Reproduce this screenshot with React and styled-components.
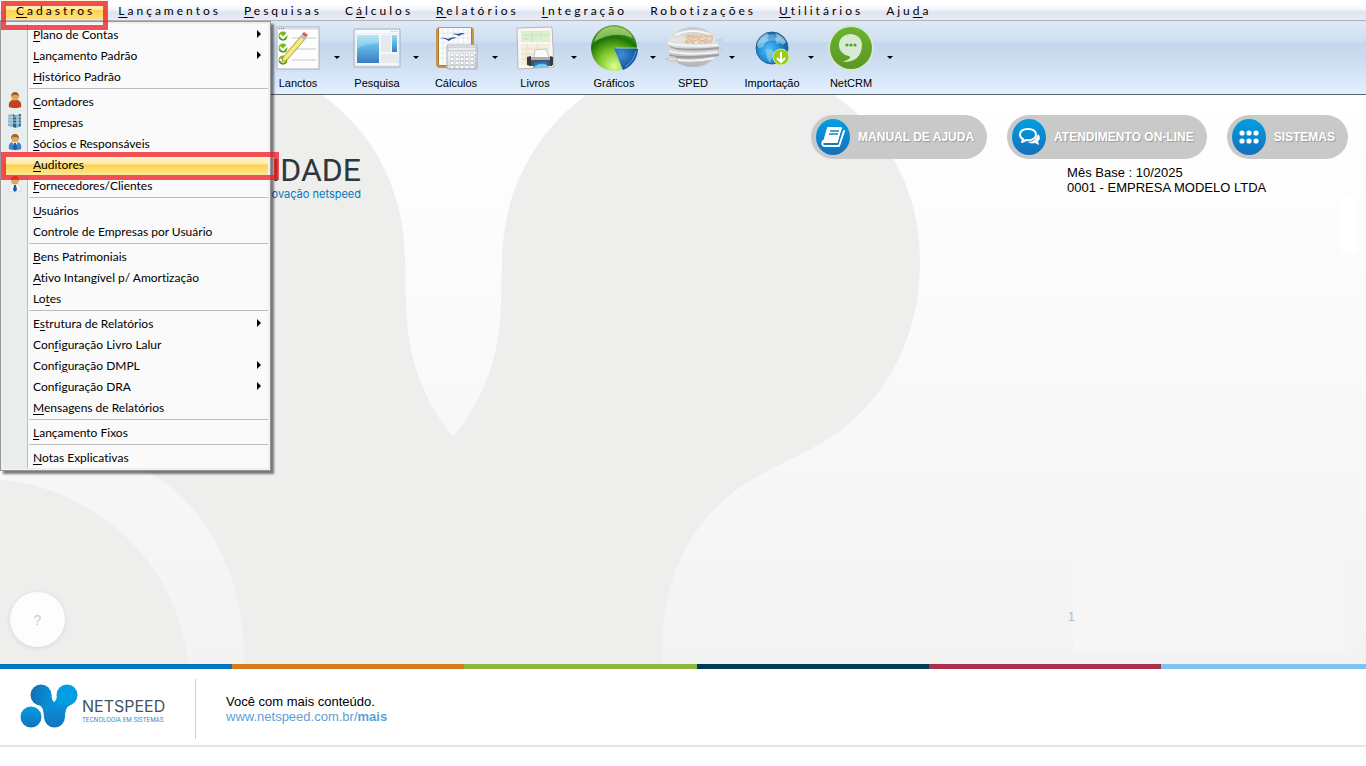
import React from "react";
import styled, { createGlobalStyle, css } from "styled-components";

const GlobalStyle = createGlobalStyle`
  * {
    box-sizing: border-box;
  }
  body {
    margin: 0;
    background-color: #ffffff;
    color: #000000;
    font-family: "Liberation Sans", Arial, sans-serif;
  }
  button {
    margin: 0;
    padding: 0;
    border: 0;
    background: none;
    color: inherit;
    font: inherit;
  }
`;

const Page = styled.div`
  position: relative;
  display: flex;
  flex-direction: column;
  min-height: 100vh;
`;

const MenuBar = styled.nav`
  display: flex;
  height: 21px;
  padding-left: 4px;
  background: linear-gradient(#ffffff 20%, #f2f4fa 50%, #dfe4f1 60%, #e9ecf6);
  border-bottom: 1px solid #b4b4b4;
`;

const MenuButton = styled.button`
  height: 20px;
  padding: 2px 11px 0 12px;
  font-family: Lato, "Open Sans", sans-serif;
  font-size: 12px;
  line-height: 18px;
  letter-spacing: 3px;
  white-space: nowrap;
  ${props =>
    props.$active &&
    css`
      background: linear-gradient(#fff6d6, #ffe9a4 48%, #ffd24c 52%, #ffe287);
    `}
`;

const Mnemonic = styled.u`
  text-underline-offset: 2px;
`;

const ToolBar = styled.div`
  display: flex;
  height: 74px;
  padding-left: 269px;
  background: linear-gradient(
    #dee9f7,
    #cfdff1 28%,
    #c4d6eb 30%,
    #cfdff2 60%,
    #e3f0ff
  );
  border-bottom: 1px solid #5d6269;
`;

const Tool = styled.div`
  display: flex;
  flex: 0 0 79px;
`;

const ToolButton = styled.button`
  display: flex;
  flex-direction: column;
  align-items: center;
  width: 58px;
  padding-top: 2px;
  font-size: 11px;
  line-height: 16px;
  white-space: nowrap;
`;

const ToolIcon = styled.svg`
  width: 56px;
  height: 50px;
  margin-bottom: 2px;
  overflow: visible;
`;

const DropButton = styled.button`
  display: flex;
  align-items: center;
  justify-content: center;
  width: 20px;
`;

const Caret = styled.span`
  border: 3px solid transparent;
  border-top-color: #000000;
  border-bottom: 0;
`;

const Stage = styled.main`
  position: relative;
  display: flex;
  flex: 1;
  justify-content: space-between;
  background: linear-gradient(#ffffff, #f3f3f3);
`;

const Backdrop = styled.svg`
  position: absolute;
  top: 0;
  left: 0;
  width: 100%;
  height: 100%;
`;

const Brand = styled.div`
  position: relative;
  width: 361px;
  padding-top: 57px;
  text-align: right;
  white-space: nowrap;
`;

const BrandName = styled.h1`
  margin: 0;
  color: #2c373f;
  font-family: Roboto, sans-serif;
  font-size: 32px;
  font-weight: 400;
  line-height: 36px;
`;

const BrandLine = styled.p`
  margin: 0;
  color: #0077bf;
  font-family: Inter, sans-serif;
  font-size: 11px;
  line-height: 12px;
`;

const Side = styled.div`
  position: relative;
  padding: 20px 18px 0 0;
`;

const Pills = styled.div`
  display: flex;
  gap: 20px;
`;

const Pill = styled.button`
  display: flex;
  align-items: center;
  gap: 8px;
  height: 44px;
  padding: 0 13px 0 5px;
  border-radius: 22px;
  background-color: #c9c9c9;
  color: #ffffff;
  font-size: 12px;
  font-weight: bold;
  text-shadow: 1px 1px 1px #999999;
  white-space: nowrap;
`;

const PillIcon = styled.svg`
  width: 34px;
  height: 36px;
`;

const Company = styled.div`
  margin: 6px 0 0 256px;
  font-size: 13px;
  line-height: 15px;
`;

const Help = styled.button`
  position: absolute;
  left: 10px;
  bottom: 17px;
  width: 55px;
  height: 55px;
  border-radius: 50%;
  background-color: #fdfdfd;
  box-shadow: 0 1px 4px #d4d4d4;
  color: #cccccc;
  font-size: 14px;
`;

const Panel = styled.div`
  position: absolute;
  right: 21px;
  bottom: 13px;
  width: 272px;
  height: 148px;
  background: linear-gradient(#f7f7f700, #f7f7f7);
`;

const Counter = styled.span`
  position: absolute;
  right: 291px;
  bottom: 40px;
  color: #b9b9c4;
  font-size: 13px;
  line-height: 15px;
`;

const Patch = styled.div`
  position: absolute;
  top: 102px;
  right: 9px;
  width: 16px;
  height: 56px;
  background-color: #ffffff;
`;

const Stripe = styled.div`
  display: flex;
  height: 5px;
`;

const Band = styled.span`
  flex: 0 0 17%;
  background-color: ${props => props.$color};
  &:last-child {
    flex: 1;
  }
`;

const Footer = styled.footer`
  display: flex;
  align-items: center;
  height: 78px;
  margin-bottom: 19px;
  padding: 4px 0 0 20px;
  border-bottom: 2px solid #e4e5e4;
`;

const FooterMark = styled.svg`
  width: 58px;
  height: 44px;
  margin-bottom: 6px;
`;

const FooterBrand = styled.div`
  width: 118px;
  height: 60px;
  padding: 18px 0 0 4px;
  border-right: 1px solid #cfcfcf;
  font-family: Inter, sans-serif;
  white-space: nowrap;
`;

const FooterName = styled.div`
  color: #44535f;
  font-size: 16px;
  line-height: 18px;
`;

const FooterTag = styled.div`
  color: #2b86c8;
  font-size: 6px;
  line-height: 10px;
`;

const FooterText = styled.div`
  padding-left: 30px;
  font-size: 13px;
  line-height: 15px;
`;

const FooterLink = styled.a`
  display: block;
  color: #5b9fd6;
  text-decoration: none;
`;

const Menu = styled.ul`
  position: absolute;
  top: 21px;
  left: 0;
  width: 271px;
  margin: 0;
  padding: 2px;
  border: 1px solid #979797;
  background: linear-gradient(
        to right,
        #e8eeee 24px,
        #bdbdbd 24px,
        #bdbdbd 25px,
        #fafafa 25px
      )
      content-box,
    linear-gradient(#f0f0f0, #f0f0f0);
  box-shadow: 3px 3px 2px #00000080;
  list-style: none;
`;

const Entry = styled.li`
  height: 21px;
`;

const EntryButton = styled.button`
  display: flex;
  align-items: center;
  width: 100%;
  height: 21px;
  font-family: Lato, "Open Sans", sans-serif;
  font-size: 12px;
  font-variant-ligatures: none;
  line-height: 20px;
  text-align: left;
  white-space: nowrap;
  ${props =>
    props.$active &&
    css`
      background: linear-gradient(#fffbe8, #ffe9a6 48%, #ffd146 52%, #ffe796);
    `}
`;

const EntryIcon = styled.svg`
  flex: none;
  width: 16px;
  height: 18px;
  margin: 0 10px 4px 4px;
`;

const EntryLabel = styled.span`
  flex: 1;
`;

const Arrow = styled.span`
  margin: 0 7px 2px 0;
  border: 4px solid transparent;
  border-left-color: #000000;
  border-right: 0;
`;

const Separator = styled.li`
  height: 4px;
  margin-left: 26px;
  border-top: 1px solid transparent;
  background: linear-gradient(#bdbdbd 1px, transparent 1px) padding-box;
`;

const Marker = styled.div`
  position: absolute;
  top: ${props => props.$top}px;
  left: 1px;
  width: ${props => props.$width}px;
  height: ${props => props.$height}px;
  border: 5px solid #ee1c24c4;
  pointer-events: none;
`;

const menus = [
  "&Cadastros",
  "&Lançamentos",
  "&Pesquisas",
  "C&álculos",
  "&Relatórios",
  "&Integração",
  "Robotizações",
  "&Utilitários",
  "Aju&da"
];

const entries = [
  { label: "&Plano de Contas", arrow: true },
  { label: "&Lançamento Padrão", arrow: true },
  { label: "&Histórico Padrão" },
  null,
  { label: "&Contadores", icon: "red" },
  { label: "&Empresas", icon: "building" },
  { label: "&Sócios e Responsáveis", icon: "blue" },
  { label: "&Auditores", active: true },
  { label: "&Fornecedores/Clientes", icon: "white" },
  null,
  { label: "&Usuários" },
  { label: "Controle de Empresas por Usuário" },
  null,
  { label: "&Bens Patrimoniais" },
  { label: "&Ativo Intangível p/ Amortização" },
  { label: "Lo&tes" },
  null,
  { label: "E&strutura de Relatórios", arrow: true },
  { label: "Con&figuração Livro Lalur" },
  { label: "Confi&guração DMPL", arrow: true },
  { label: "Configuração DRA", arrow: true },
  { label: "&Mensagens de Relatórios" },
  null,
  { label: "&Lançamento Fixos" },
  null,
  { label: "&Notas Explicativas" }
];

const stripe = ["#0077bf", "#d67c1c", "#8db63c", "#003b57", "#a7304b", "#80c3f0"];

// "&" marks the underlined access key
const Label = ({ text }) => {
  const at = text.indexOf("&");
  if (at < 0) {
    return text;
  }
  return (
    <>
      {text.slice(0, at)}
      <Mnemonic>{text[at + 1]}</Mnemonic>
      {text.slice(at + 2)}
    </>
  );
};

const Gradients = () => (
  <defs>
    <linearGradient id="sky" x1="0" y1="0" x2="0" y2="1">
      <stop offset="0" stopColor="#9bdcf5" />
      <stop offset="0.45" stopColor="#5fb4e2" />
      <stop offset="1" stopColor="#3d7cc0" />
    </linearGradient>
    <linearGradient id="silver" x1="0" y1="0" x2="0" y2="1">
      <stop offset="0" stopColor="#ffffff" />
      <stop offset="1" stopColor="#d5d9e0" />
    </linearGradient>
    <radialGradient id="lime" cx="0.5" cy="0.9" r="0.85">
      <stop offset="0" stopColor="#dcff8e" />
      <stop offset="0.4" stopColor="#7cc62c" />
      <stop offset="0.75" stopColor="#1d7405" />
      <stop offset="1" stopColor="#69a53b" />
    </radialGradient>
    <radialGradient id="slice" cx="0.3" cy="0.3" r="0.9">
      <stop offset="0" stopColor="#3e8fd8" />
      <stop offset="1" stopColor="#063a86" />
    </radialGradient>
    <radialGradient id="globe" cx="0.4" cy="0.55" r="0.6">
      <stop offset="0" stopColor="#4cc4ff" />
      <stop offset="0.7" stopColor="#1680cc" />
      <stop offset="1" stopColor="#155a96" />
    </radialGradient>
    <linearGradient id="steel" x1="0" y1="0" x2="0" y2="1">
      <stop offset="0" stopColor="#c4c4c4" />
      <stop offset="0.3" stopColor="#e6e6e6" />
      <stop offset="1" stopColor="#b4b4b4" />
    </linearGradient>
    <linearGradient id="leaf" x1="0" y1="0" x2="0" y2="1">
      <stop offset="0" stopColor="#6ab42d" />
      <stop offset="1" stopColor="#5b9624" />
    </linearGradient>
    <linearGradient id="azure" x1="0" y1="0" x2="0" y2="1">
      <stop offset="0" stopColor="#009fe3" />
      <stop offset="1" stopColor="#1471ba" />
    </linearGradient>
    <linearGradient
      id="mark"
      gradientUnits="userSpaceOnUse"
      x1="12"
      y1="8"
      x2="40"
      y2="12"
    >
      <stop offset="0" stopColor="#1471ba" />
      <stop offset="1" stopColor="#009fe3" />
    </linearGradient>
    <linearGradient
      id="stem"
      gradientUnits="userSpaceOnUse"
      x1="0"
      y1="18"
      x2="0"
      y2="44"
    >
      <stop offset="0" stopColor="#0a86d0" stopOpacity="0" />
      <stop offset="0.3" stopColor="#0b8ad2" />
      <stop offset="1" stopColor="#1471ba" />
    </linearGradient>
  </defs>
);

const Checks = () => (
  <>
    <rect x="7" y="4" width="42" height="42" fill="#fdfdfd" stroke="#a9adb3" />
    <path d="M8 5.5h40" stroke="#d9dce0" strokeWidth="2" />
    <path d="M9 5.5h6" stroke="#e0543e" strokeDasharray="1 1" />
    <path d="M22 15h24M22 26h24M22 37h24" stroke="#c5c9cd" />
    {[13, 25, 37].map(y => (
      <g key={y}>
        <circle cx="13" cy={y} r="4.5" fill="#76b82a" />
        <path
          d={`M10 ${y - 1}l3 3 5-5`}
          fill="none"
          stroke="#ffffff"
          strokeWidth="2"
        />
        <path d={`M9 ${y + 2}q4 4 8 0`} fill="none" stroke="#4c8d18" />
      </g>
    ))}
    <path
      d="M32 12l4 3-19 22-5 2 1-5z"
      fill="#f3e36c"
      stroke="#a08c3a"
      strokeWidth="0.8"
    />
    <path d="M34 14L15 36" stroke="#fff8b8" />
    <path d="M30 14l3-4 4 3-3 4z" fill="#b7c1c8" />
    <path d="M32 11l2-2 4 3-2 2z" fill="#d95a48" />
  </>
);

const Windows = () => (
  <>
    <rect
      x="5"
      y="6"
      width="46"
      height="38"
      rx="1"
      fill="#e6eef6"
      stroke="#a5b0bf"
    />
    <path d="M6 8.5h44" stroke="#f8fbfd" strokeWidth="3" />
    <path d="M42 8.5h7" stroke="#c3ccd6" strokeDasharray="2 1" />
    <rect x="7" y="11" width="42" height="31" fill="#f5f7f9" />
    <rect x="8" y="12" width="22" height="28" fill="url(#sky)" />
    <path d="M8 12h22v8q-14 0-22 6z" fill="#ffffff" opacity="0.25" />
    <rect x="32" y="12" width="10" height="17" fill="#e7eaed" />
    <rect x="32" y="31" width="17" height="9" fill="#e7eaed" />
    <rect x="43" y="12" width="5" height="17" fill="url(#sky)" />
  </>
);

const Calc = () => (
  <>
    <rect x="8" y="4" width="38" height="41" rx="4" fill="#c8954b" />
    <rect x="10" y="5" width="34" height="38" fill="#ab7a35" />
    <rect x="11" y="5" width="32" height="37" fill="#fcfcfd" />
    <path
      d="M15 5v37M20 5v37M25 5v37M30 5v37M35 5v37M40 5v37M11 10h32M11 15h32M11 20h32M11 25h32M11 30h32M11 35h32"
      stroke="#dfe4ea"
      strokeWidth="0.8"
    />
    <path
      d="M12 15q5-1 8 1 5-3 9-1-5 0-8 3-4-3-9-3zM24 11q4-1 6 0 4-2 7 0-4 0-6 2-3-2-7-2z"
      fill="#294f9c"
    />
    <rect
      x="19"
      y="22"
      width="30"
      height="24"
      rx="1"
      fill="url(#silver)"
      stroke="#a8adb5"
    />
    <rect x="20" y="24" width="28" height="4" fill="#e9edf0" stroke="#b8bdc4" />
    {[32, 36, 40, 44].map(y => (
      <path
        key={y}
        d={`M22 ${y}h26`}
        stroke="#b5bac1"
        strokeWidth="3"
        strokeDasharray="4 1"
      />
    ))}
    {[32, 36, 40, 44].map(y => (
      <path
        key={y}
        d={`M22.5 ${y}h25`}
        stroke="#ffffff"
        strokeWidth="2"
        strokeDasharray="3 2"
      />
    ))}
  </>
);

const Books = () => (
  <>
    <path d="M10 5l35-1 2 40-36 2z" fill="#f8f7f1" stroke="#b6b9b9" />
    <path d="M14 8h29v11H14z" fill="#dcefd0" />
    <path d="M15 12h28M25 8v11M34 8v6M16 16h6" stroke="#c8e2bb" />
    <path d="M14 21h29v21H14z" fill="#f5eedd" />
    <path
      d="M14 26h28M14 31h16M14 36h10M20 21v20M30 21v10"
      stroke="#e6dabf"
      strokeWidth="0.8"
    />
    <path d="M28 27l11-1 3 9H27z" fill="#fafbfd" stroke="#c4c8cf" />
    <path d="M22 34h23v9H22z" fill="#4c5359" />
    <path d="M22 34h23v3H22z" fill="#a9afb4" />
    <path d="M20 34l4-1v10l-4-1zM43 33l3 1v8l-3 1z" fill="#343a40" />
    <path d="M28 39h12l1 6H26z" fill="#2a70c4" />
    <path d="M28 43q6-4 12-1l1 3H26z" fill="#74cde8" />
  </>
);

const Pie = () => (
  <>
    <circle cx="28" cy="25" r="23" fill="url(#lime)" />
    <path d="M8 19a21 21 0 0 1 39-4q-19-8-39 4z" fill="#d4f59d" opacity="0.5" />
    <path d="M28 25l24 1a23 23 0 0 1-15 21z" fill="url(#slice)" />
    <path d="M29 25h22" stroke="#8ac5ea" />
    <path d="M50 28q-2 10-11 16" fill="none" stroke="#5aa4dc" />
  </>
);

const Sped = () => (
  <>
    <ellipse cx="28" cy="24" rx="25" ry="20" fill="url(#steel)" />
    <path
      d="M10 12q18-8 36 0"
      fill="none"
      stroke="#f6f6f6"
      strokeWidth="2"
    />
    <path
      d="M4 22q5 6 50 2v2q-40 4-49-2zM4 31q10 4 50 0v2q-40 5-49 0z"
      fill="#9c9c9c"
    />
    <path
      d="M3 20q12 4 50 2M4 28q20 5 48 1M7 36q20 4 42-1"
      fill="none"
      stroke="#f4f4f4"
      strokeWidth="2"
    />
    <path
      d="M0 36q5-3 10-2l3 4q-8 1-13-2zM50 17h8M48 27h10"
      fill="#dcdcdc"
      stroke="#bfc5ca"
    />
    <text
      x="34"
      y="20"
      fill="#fff1da"
      stroke="#d29a5e"
      strokeWidth="0.6"
      fontFamily="Liberation Sans"
      fontSize="10"
      fontStyle="italic"
      fontWeight="bold"
      textAnchor="middle"
    >
      SPED
    </text>
  </>
);

const Globe = () => (
  <>
    <circle cx="28" cy="25" r="16" fill="url(#globe)" stroke="#29618f" />
    <path
      d="M15 17q3-5 8-7l2 3-2 2 2 2-4 3-2 4-4 1-2-3zM31 10q8 2 11 9l-3 3-3-2-3 1-2-5 2-2zM22 26l6 1 3 4-3 4-2 5-3-5z"
      fill="#a9d5ea"
      opacity="0.6"
    />
    <path d="M13 22a15 13 0 0 1 29-2q-14-6-29 2z" fill="#ffffff" opacity="0.25" />
    <circle cx="37" cy="34" r="8" fill="#9bca1d" stroke="#d6e98b" />
    <path
      d="M37 29v9M33 35l4 4 4-4"
      fill="none"
      stroke="#ffffff"
      strokeWidth="2"
    />
  </>
);

const Crm = () => (
  <>
    <circle cx="28" cy="25" r="23" fill="#d3e7d4" />
    <circle cx="28" cy="25" r="21" fill="url(#leaf)" />
    <path
      d="M28 11a11 11 0 0 0-2 22q2 1 0 3l-6 3q19 0 19-18-1-9-11-10z"
      fill="#d6ead6"
    />
    <circle cx="24" cy="22" r="1.6" fill="#5b9f28" />
    <circle cx="28" cy="22" r="1.6" fill="#5b9f28" />
    <circle cx="32" cy="22" r="1.6" fill="#5b9f28" />
  </>
);

const tools = [
  { name: "Lanctos", Icon: Checks },
  { name: "Pesquisa", Icon: Windows },
  { name: "Cálculos", Icon: Calc },
  { name: "Livros", Icon: Books },
  { name: "Gráficos", Icon: Pie },
  { name: "SPED", Icon: Sped },
  { name: "Importação", Icon: Globe },
  { name: "NetCRM", Icon: Crm }
];

const coats = { red: "#c8431c", blue: "#3b86cc", white: "#f4f7fa" };

const EntryPicture = ({ kind }) => (
  <EntryIcon viewBox="0 0 16 18">
    {kind === "building" && (
      <>
        <path d="M1 3l5-1v13l-5-1z" fill="#8fb6c8" />
        <path d="M6 2l3 2v12l-3-1z" fill="#2f6680" />
        <path d="M9 3l5-1v12l-5 2z" fill="#7fb0c6" />
        <path d="M12 2l2 0v12l-2 1z" fill="#3c7490" />
        <path
          d="M1 5h13M1 8h13M1 11h13"
          stroke="#e2f0f5"
          strokeWidth="0.7"
        />
      </>
    )}
    {coats[kind] && (
      <>
        <path
          d="M2 16q-1-6 4-7h4q5 1 4 7-6 2-12 0z"
          fill={coats[kind]}
          stroke={kind === "white" ? "#c9d1d8" : "#00000033"}
          strokeWidth="0.6"
        />
        {kind !== "red" && (
          <>
            <path d="M5 9l3 5 3-5z" fill="#ffffff" />
            <path d="M7 10h2l1 5-2 2-2-2z" fill="#1c5ba6" />
          </>
        )}
        <circle cx="8" cy="6" r="3.6" fill="#e6a45a" />
        <path d="M4 6q0-5 4-5t4 5l-2-2H6z" fill="#9c6420" />
      </>
    )}
  </EntryIcon>
);

const ManualIcon = () => (
  <PillIcon viewBox="0 0 34 36">
    <ellipse cx="17" cy="18" rx="17" ry="18" fill="url(#azure)" />
    <path
      d="M12 9h13l-4 14H8z"
      fill="#ffffff"
      stroke="#ffffff"
      strokeLinejoin="round"
      strokeWidth="2"
    />
    <path d="M14 12h9M13 15h9" stroke="#0e85cc" strokeWidth="1.4" />
    <path
      d="M7 22q-2 5 2 5h14l5-15"
      fill="none"
      stroke="#ffffff"
      strokeWidth="2"
      strokeLinecap="round"
      strokeLinejoin="round"
    />
    <path d="M9 25h13l4-14" fill="none" stroke="#0e7bc6" />
  </PillIcon>
);

const ChatIcon = () => (
  <PillIcon viewBox="0 0 34 36">
    <ellipse cx="17" cy="18" rx="17" ry="18" fill="url(#azure)" />
    <path
      d="M16 10c-5 0-8 2-8 6 0 2 1 3 3 4l-1 3 4-2c6 1 10-2 10-5 0-4-3-6-8-6z"
      fill="none"
      stroke="#ffffff"
      strokeWidth="2"
      strokeLinejoin="round"
    />
    <path
      d="M26 15c3 3 2 6 0 7l1 4-4-2c-3 1-6 0-7-1 5 0 9-3 10-8z"
      fill="#ffffff"
    />
  </PillIcon>
);

const GridIcon = () => (
  <PillIcon viewBox="0 0 34 36">
    <ellipse cx="17" cy="18" rx="17" ry="18" fill="url(#azure)" />
    {[14, 22].map(y =>
      [10, 17, 24].map(x => (
        <circle key={`${x}-${y}`} cx={x} cy={y} r="2.6" fill="#ffffff" />
      ))
    )}
  </PillIcon>
);

const App = () => (
  <Page>
    <GlobalStyle />
    <MenuBar>
      {menus.map((menu, index) => (
        <MenuButton key={menu} $active={index === 0}>
          <Label text={menu} />
        </MenuButton>
      ))}
    </MenuBar>
    <ToolBar>
      {tools.map(({ name, Icon }) => (
        <Tool key={name}>
          <ToolButton>
            <ToolIcon viewBox="0 0 56 50">
              <Icon />
            </ToolIcon>
            {name}
          </ToolButton>
          <DropButton aria-label={`Opções de ${name}`}>
            <Caret />
          </DropButton>
        </Tool>
      ))}
    </ToolBar>
    <Stage>
      <Backdrop viewBox="0 0 1366 569" preserveAspectRatio="xMinYMin slice">
        <Gradients />
        <path
          d="M0 0H322C372 36 404 92 405 165L406 208C407 260 422 305 453 341C484 305 500 260 501 208L502 165C503 92 538 36 586 0H834C888 37 920 97 920 165C920 219 905 264 873 304C838 346 804 356 770 375C700 408 664 470 662 551V569H244C246 490 210 410 148 377C100 350 50 340 0 340Z"
          fill="#eeeeed"
        />
        <path d="M0 385C95 392 178 468 188 569H0Z" fill="#eeeeed" />
      </Backdrop>
      <Brand>
        <BrandName>IDADE</BrandName>
        <BrandLine>novação netspeed</BrandLine>
      </Brand>
      <Side>
        <Pills>
          <Pill>
            <ManualIcon />
            MANUAL DE AJUDA
          </Pill>
          <Pill>
            <ChatIcon />
            ATENDIMENTO ON-LINE
          </Pill>
          <Pill>
            <GridIcon />
            SISTEMAS
          </Pill>
        </Pills>
        <Company>
          Mês Base : 10/2025
          <br />
          0001 - EMPRESA MODELO LTDA
        </Company>
      </Side>
      <Patch />
      <Panel />
      <Counter>1</Counter>
      <Help>?</Help>
    </Stage>
    <Stripe>
      {stripe.map(color => (
        <Band key={color} $color={color} />
      ))}
    </Stripe>
    <Footer>
      <FooterMark viewBox="0 0 58 44">
        <g fill="url(#mark)">
          <circle cx="21" cy="11" r="10.5" />
          <circle cx="47" cy="11" r="10.5" />
          <path d="M13 18C18 22 24 19 24 33H45C45 19 52 23 56 16L47 1 37 11Q37 16 34 18 31.500 16 31.500 11L21 1Z" />
        </g>
        <path
          d="M16 20C20 21 24 22 24 33A10.500 10.500 0 0 0 45 33C45 22 49 21 53 19L34 18Z"
          fill="url(#stem)"
        />
        <circle cx="11" cy="33" r="10.5" fill="url(#azure)" />
      </FooterMark>
      <FooterBrand>
        <FooterName>NETSPEED</FooterName>
        <FooterTag>TECNOLOGIA EM SISTEMAS</FooterTag>
      </FooterBrand>
      <FooterText>
        Você com mais conteúdo.
        <FooterLink href="#mais">
          www.netspeed.com.br/<b>mais</b>
        </FooterLink>
      </FooterText>
    </Footer>
    <Menu>
      {entries.map((entry, index) =>
        entry ? (
          <Entry key={index}>
            <EntryButton $active={entry.active}>
              <EntryPicture kind={entry.icon} />
              <EntryLabel>
                <Label text={entry.label} />
              </EntryLabel>
              {entry.arrow ? <Arrow /> : null}
            </EntryButton>
          </Entry>
        ) : (
          <Separator key={index} />
        )
      )}
    </Menu>
    <Marker $top={1} $width={107} $height={29} />
    <Marker $top={152} $width={278} $height={28} />
  </Page>
);

export default App;
